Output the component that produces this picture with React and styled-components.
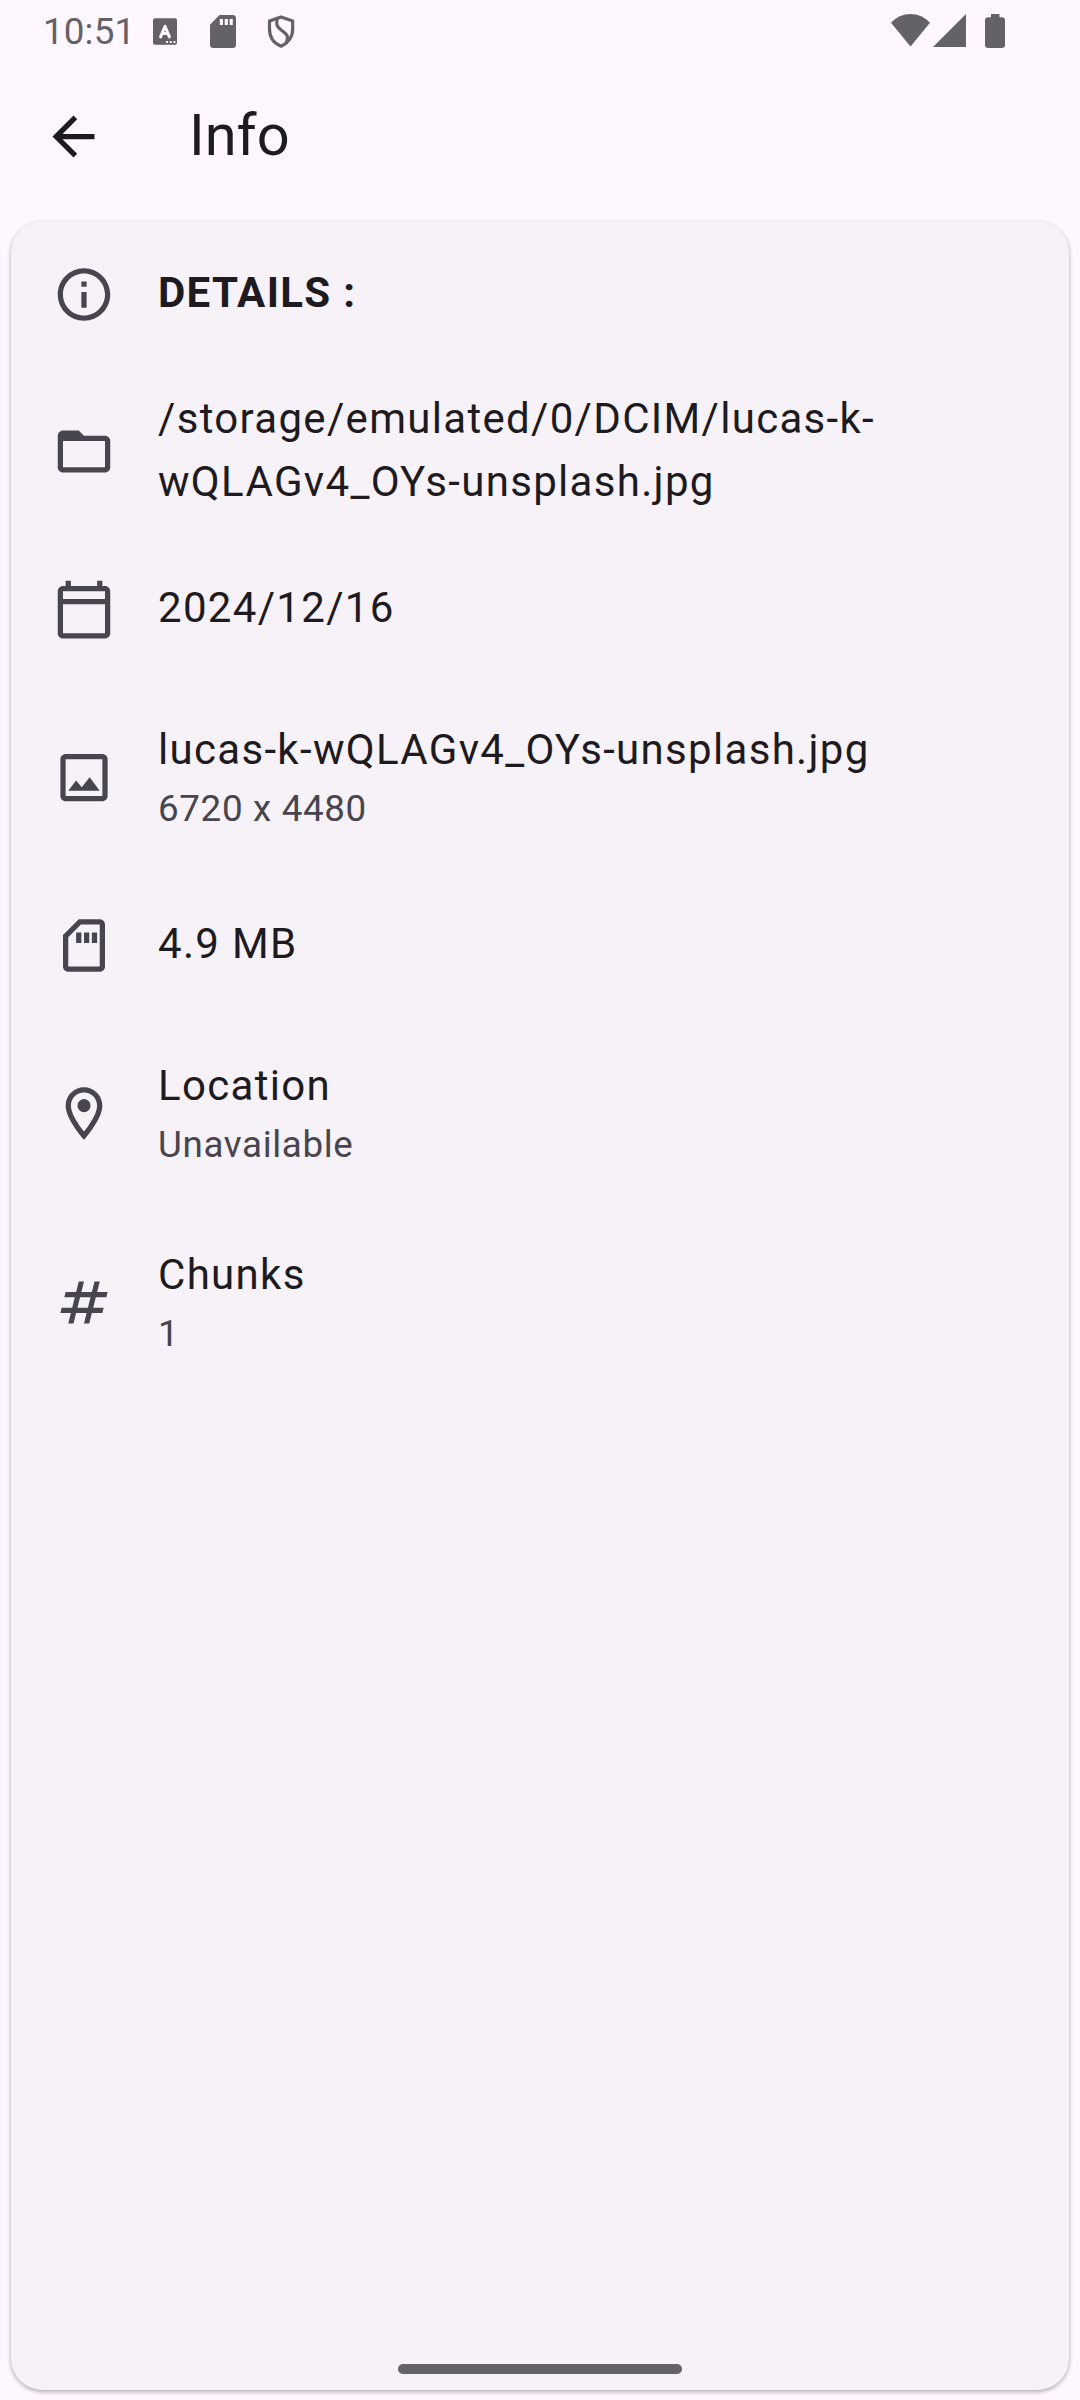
import React from "react";
import styled, { createGlobalStyle } from "styled-components";

const Global = createGlobalStyle`
  html, body { margin: 0; padding: 0; background: #fef7ff; }
  * { box-sizing: border-box; }
`;

const Screen = styled.div`
  position: relative;
  display: flex;
  flex-direction: column;
  width: 1080px;
  height: 2400px;
  overflow: hidden;
  background: #fef7ff;
  color: #1d1b20;
  font-family: Roboto, "Noto Sans", sans-serif;
`;

const StatusBar = styled.header`
  display: flex;
  align-items: center;
  justify-content: space-between;
  height: 63px;
  padding: 0 72px 0 43px;
  color: #656267;
`;

const StatusGroup = styled.div`
  display: flex;
  align-items: center;
  height: 63px;
`;

const Clock = styled.span`
  width: 110px;
  font-size: 36.75px;
  line-height: 43px;
  letter-spacing: 0.15px;
  white-space: nowrap;
`;

const Glyph = styled.svg`
  display: block;
  flex: none;
  width: ${(p) => p.$w}px;
  height: ${(p) => p.$h}px;
  fill: currentColor;
`;

const AppBar = styled.nav`
  display: flex;
  align-items: center;
  height: 147px;
`;

const BackButton = styled.button`
  display: flex;
  align-items: center;
  justify-content: center;
  width: 147px;
  height: 147px;
  margin: 0 42px 0 0;
  padding: 0;
  border: 0;
  background: none;
  color: #1d1b20;
`;

const PageTitle = styled.h1`
  margin: 0;
  padding-bottom: 1px;
  font-size: 57.75px;
  font-weight: 400;
  line-height: 73.5px;
`;

const Card = styled.main`
  flex: 1;
  margin: 10.5px 11px;
  border-radius: 31.5px;
  background: #f7f1f8;
  box-shadow: 0 2px 4px rgba(0, 0, 0, 0.26), 0 1px 4px rgba(0, 0, 0, 0.08);
`;

const Row = styled.section`
  display: flex;
  align-items: center;
  gap: 43px;
  height: ${(p) => p.$height}px;
  padding: 0 63px 0 41px;
`;

const RowIcon = styled.span`
  display: flex;
  flex: none;
  color: #49454f;
`;

const RowText = styled.div`
  flex: 1;
  padding-bottom: ${(p) => (p.$stacked ? 0 : 3)}px;
`;

const Title = styled.div`
  font-size: 42px;
  font-weight: ${(p) => (p.$bold ? 700 : 400)};
  line-height: 63px;
  letter-spacing: 1.3125px;
`;

const Subtitle = styled.div`
  margin-top: 2px;
  color: #49454f;
  font-size: 36.75px;
  line-height: 52.5px;
  letter-spacing: 0.65625px;
`;

const HomeIndicator = styled.div`
  position: absolute;
  left: 398px;
  bottom: 26px;
  width: 284px;
  height: 10px;
  border-radius: 5px;
  background: #656267;
`;

const PATHS = {
  back: "M20 11H7.83l5.59-5.59L12 4l-8 8 8 8 1.41-1.41L7.83 13H20v-2z",
  info: "M11 7h2v2h-2V7zm0 4h2v6h-2v-6zm1-9C6.48 2 2 6.48 2 12s4.48 10 10 10 10-4.48 10-10S17.52 2 12 2zm0 18c-4.41 0-8-3.59-8-8s3.59-8 8-8 8 3.59 8 8-3.59 8-8 8z",
  folder: "M20 6h-8l-2-2H4c-1.1 0-1.99.9-1.99 2L2 18c0 1.1.9 2 2 2h16c1.1 0 2-.9 2-2V8c0-1.1-.9-2-2-2zm0 12H4V8h16v10z",
  calendar: "M20 3h-1V1h-2v2H7V1H5v2H4c-1.1 0-2 .9-2 2v16c0 1.1.9 2 2 2h16c1.1 0 2-.9 2-2V5c0-1.1-.9-2-2-2zm0 18H4V10h16v11zm0-13H4V5h16v3z",
  image: "M19 5v14H5V5h14m0-2H5c-1.1 0-2 .9-2 2v14c0 1.1.9 2 2 2h14c1.1 0 2-.9 2-2V5c0-1.1-.9-2-2-2zm-4.86 8.86l-3 3.87L9 13.14 6 17h12l-3.86-5.14z",
  storage: "M18 2h-8L4 8v12c0 1.1.9 2 2 2h12c1.1 0 2-.9 2-2V4c0-1.1-.9-2-2-2zm0 18H6V8.83L10.83 4H18v16zM9 7h2v4H9V7zm3 0h2v4h-2V7zm3 0h2v4h-2V7z",
  location: "M12 2C8.13 2 5 5.13 5 9c0 5.25 7 13 7 13s7-7.75 7-13c0-3.87-3.13-7-7-7zM7 9c0-2.76 2.24-5 5-5s5 2.24 5 5c0 2.88-2.88 7.19-5 9.88C9.92 16.21 7 11.85 7 9zM14.5 9a2.5 2.5 0 1 1-5 0a2.5 2.5 0 1 1 5 0z",
  hash: "M20.5 10L21 8h-4l1-4h-2l-1 4h-4l1-4h-2L9 8H5l-.5 2h4l-1 4h-4L3 16h4l-1 4h2l1-4h4l-1 4h2l1-4h4l.5-2h-4l1-4h4zm-7 4h-4l1-4h4l-1 4z",
};

const Icon = ({ name, shift = 0 }) => (
  <Glyph $w={63} $h={63} viewBox={`${-shift} 0 24 24`}>
    <path d={PATHS[name]} />
  </Glyph>
);

const ROWS = [
  { icon: "info", title: "DETAILS :", bold: true, height: 147 },
  { icon: "folder", title: "/storage/emulated/0/DCIM/lucas-k-wQLAGv4_OYs-unsplash.jpg", height: 168 },
  { icon: "calendar", title: "2024/12/16", height: 147 },
  { icon: "image", title: "lucas-k-wQLAGv4_OYs-unsplash.jpg", subtitle: "6720 x 4480", height: 189 },
  { icon: "storage", title: "4.9 MB", height: 147 },
  { icon: "location", title: "Location", subtitle: "Unavailable", height: 189 },
  { icon: "hash", title: "Chunks", subtitle: "1", height: 189 },
];

export default function App() {
  return (
    <Screen>
      <Global />
      <StatusBar>
        <StatusGroup>
          <Clock>10:51</Clock>
          <Glyph $w={150} $h={63} viewBox="153 0 150 63">
            <rect x="153" y="18.3" width="24" height="26.4" rx="2" />
            <path d="M160.6 36.9L165 26.2L169.4 36.9M162.3 33.6H167.7" fill="none" stroke="#fef7ff" strokeWidth="3" strokeLinecap="round" strokeLinejoin="round" />
            <path d="M166 41h2v2h-2zM169.7 41h2v2h-2zM173.4 41h2v2h-2z" fill="#fef7ff" />
            <path fillRule="evenodd" d="M219.5 15H232.7Q236 15 236 18.3V44.7Q236 48 232.7 48H213.3Q210 48 210 44.7V24.8ZM219.8 19v6h3.2v-6zM224.7 19v6h3.2v-6zM229.6 19v6h3.2v-6z" />
            <path d="M281 16.9L269.5 21V29C269.5 37.500 274.5 43.500 281 46.2C287.5 43.500 292.7 37.500 292.7 29V21Z" fill="none" stroke="currentColor" strokeWidth="3.2" strokeLinejoin="round" />
            <path d="M277.5 18.5C275.8 22.500 276.500 26 280 29L285.500 33.500C288.500 36.300 288 39 286 43" fill="none" stroke="currentColor" strokeWidth="3.1" />
          </Glyph>
        </StatusGroup>
        <Glyph $w={118} $h={63} viewBox="890 0 118 63">
          <path d="M891 22.800Q899 14 910.500 14T930 22.800L910.500 46.500Z" />
          <path d="M966 14V47H933Z" />
          <path d="M991 14h8.500v3.300h2.500q3 0 3 3v24.700q0 3-3 3h-14q-3 0-3-3v-24.700q0-3 3-3h3z" />
        </Glyph>
      </StatusBar>
      <AppBar>
        <BackButton aria-label="Back">
          <Icon name="back" />
        </BackButton>
        <PageTitle>Info</PageTitle>
      </AppBar>
      <Card>
        {ROWS.map((r) => (
          <Row key={r.icon} $height={r.height}>
            <RowIcon>
              <Icon name={r.icon} shift={0.19} />
            </RowIcon>
            <RowText $stacked={Boolean(r.subtitle)}>
              <Title $bold={r.bold}>{r.title}</Title>
              {r.subtitle && <Subtitle>{r.subtitle}</Subtitle>}
            </RowText>
          </Row>
        ))}
      </Card>
      <HomeIndicator />
    </Screen>
  );
}
